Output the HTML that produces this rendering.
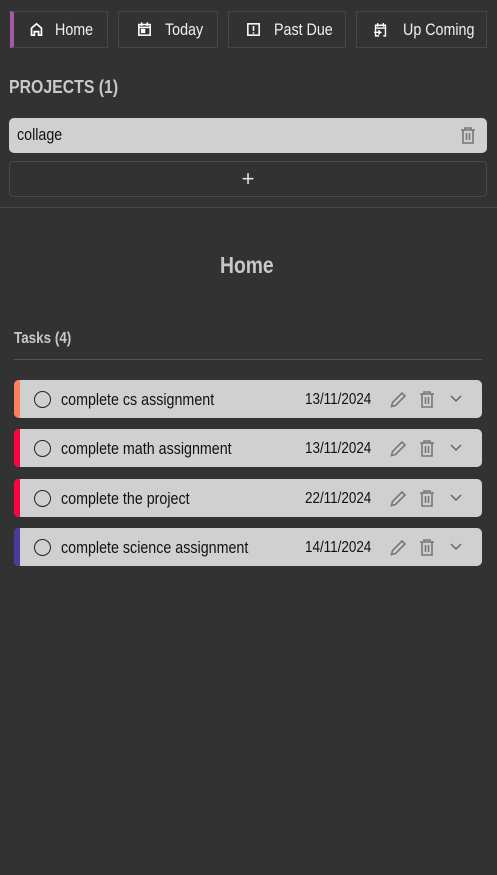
<!DOCTYPE html>
<html><head><style>
*{box-sizing:border-box;margin:0;padding:0}
body{width:497px;height:875px;background:#323232;font-family:"Liberation Sans",sans-serif;color:#ddd;position:relative;overflow:hidden}
.n{display:inline-block;transform:scaleX(0.84);transform-origin:left center;white-space:nowrap}
.nav{position:absolute;top:11px;height:37px;border:1px solid #474747;font-size:17px;color:#f0f0f0}
.nav svg{position:absolute;top:9px;width:17px;height:17px}
.nav .n{position:absolute;top:8px}
.abs{position:absolute}
.task{position:absolute;left:14px;width:468px;height:38px;background:#d0d0d0;border-radius:5px;overflow:hidden;color:#111;font-size:17px}
.task .bar{position:absolute;left:0;top:0;bottom:0;width:6px}
.circ{position:absolute;left:20px;top:11px;width:17px;height:17px;border:1.5px solid #222;border-radius:50%}
.tt{position:absolute;left:47px;top:10px}
.dt{position:absolute;left:291px;top:10px;font-size:16px}
.ic{position:absolute;top:11px}
</style></head><body>
<div class="nav" style="left:10px;width:98px;border-left:4px solid #a55aa5"><svg style="left:14px" viewBox="0 0 24 24" fill="none" stroke="#fff" stroke-width="2.4"><path d="M5 20V10l7-6 7 6v10h-4v-5h-6v5z"/></svg><span class="n" style="left:41px">Home</span></div>
<div class="nav" style="left:118px;width:100px"><svg style="left:17px" viewBox="0 0 24 24" fill="none" stroke="#fff" stroke-width="2.2"><rect x="4" y="5" width="16" height="15"/><path d="M4 9h16M8 2v5M16 2v5"/><rect x="8" y="12" width="4" height="4" fill="#fff"/></svg><span class="n" style="left:46px">Today</span></div>
<div class="nav" style="left:228px;width:118px"><svg style="left:16px" viewBox="0 0 24 24" fill="none" stroke="#fff" stroke-width="2.2"><rect x="4" y="4" width="16" height="16"/><path d="M12 7v7M12 16v2"/></svg><span class="n" style="left:45px">Past Due</span></div>
<div class="nav" style="left:356px;width:131px"><svg style="left:15px" viewBox="0 0 24 24" fill="none" stroke="#fff" stroke-width="2"><path d="M10 21H5V6h14v15h-3M5 10h14M8 3v5M16 3v5M3 16h9l-3-3M12 16l-3 3"/></svg><span class="n" style="left:46px">Up Coming</span></div>
<div class="abs" style="left:9px;top:77px;font-size:18px;font-weight:bold;color:#c8c8c8"><span class="n" style="transform:scaleX(0.88)">PROJECTS (1)</span></div>
<div class="abs" style="left:9px;top:118px;width:478px;height:35px;background:#d0d0d0;border-radius:5px;color:#111;font-size:17px;padding:7px 8px"><span class="n">collage</span>
<svg class="abs" style="right:11px;top:9px" width="16" height="17" viewBox="0 0 16 17" fill="none" stroke="#777" stroke-width="1.6"><path d="M1 3h14M5 3V1h6v2M3 3v13h10V3M6.5 6v7M9.5 6v7"/></svg></div>
<div class="abs" style="left:9px;top:161px;width:478px;height:36px;border:1px solid #4a4a4a;border-radius:5px;text-align:center;font-size:22px;line-height:34px;color:#ddd">+</div>
<div class="abs" style="left:0;top:207px;width:497px;height:1px;background:#4a4a4a"></div>
<div class="abs" style="left:220px;top:252px;font-size:23px;font-weight:bold;color:#c8c8c8"><span class="n">Home</span></div>
<div class="abs" style="left:14px;top:330px;font-size:16px;font-weight:bold;color:#c8c8c8"><span class="n">Tasks (4)</span></div>
<div class="abs" style="left:14px;top:359px;width:468px;height:1px;background:#555"></div>

<div class="task" style="top:380px"><div class="bar" style="background:#ff7f5a"></div><div class="circ"></div><span class="tt n">complete cs assignment</span><span class="dt n" style="top:11px">13/11/2024</span>
<svg class="ic" style="left:376px" width="16" height="17" viewBox="0 0 16 17" fill="none" stroke="#777" stroke-width="1.6"><path d="M1.5 15.5l1-4 9.5-9.5 3 3-9.5 9.5z"/></svg>
<svg class="ic" style="left:405px" width="16" height="17" viewBox="0 0 16 17" fill="none" stroke="#777" stroke-width="1.6"><path d="M1 3h14M5 3V1h6v2M3 3v13h10V3M6.5 6v7M9.5 6v7"/></svg>
<svg class="ic" style="left:436px;top:15px" width="12" height="8" viewBox="0 0 12 8" fill="none" stroke="#666" stroke-width="1.5"><path d="M1 1l5 5 5-5"/></svg></div>

<div class="task" style="top:429px"><div class="bar" style="background:#ff0040"></div><div class="circ"></div><span class="tt n">complete math assignment</span><span class="dt n" style="top:11px">13/11/2024</span>
<svg class="ic" style="left:376px" width="16" height="17" viewBox="0 0 16 17" fill="none" stroke="#777" stroke-width="1.6"><path d="M1.5 15.5l1-4 9.5-9.5 3 3-9.5 9.5z"/></svg>
<svg class="ic" style="left:405px" width="16" height="17" viewBox="0 0 16 17" fill="none" stroke="#777" stroke-width="1.6"><path d="M1 3h14M5 3V1h6v2M3 3v13h10V3M6.5 6v7M9.5 6v7"/></svg>
<svg class="ic" style="left:436px;top:15px" width="12" height="8" viewBox="0 0 12 8" fill="none" stroke="#666" stroke-width="1.5"><path d="M1 1l5 5 5-5"/></svg></div>

<div class="task" style="top:479px"><div class="bar" style="background:#ff0040"></div><div class="circ"></div><span class="tt n">complete the project</span><span class="dt n" style="top:11px">22/11/2024</span>
<svg class="ic" style="left:376px" width="16" height="17" viewBox="0 0 16 17" fill="none" stroke="#777" stroke-width="1.6"><path d="M1.5 15.5l1-4 9.5-9.5 3 3-9.5 9.5z"/></svg>
<svg class="ic" style="left:405px" width="16" height="17" viewBox="0 0 16 17" fill="none" stroke="#777" stroke-width="1.6"><path d="M1 3h14M5 3V1h6v2M3 3v13h10V3M6.5 6v7M9.5 6v7"/></svg>
<svg class="ic" style="left:436px;top:15px" width="12" height="8" viewBox="0 0 12 8" fill="none" stroke="#666" stroke-width="1.5"><path d="M1 1l5 5 5-5"/></svg></div>

<div class="task" style="top:528px"><div class="bar" style="background:#4a3a9c"></div><div class="circ"></div><span class="tt n">complete science assignment</span><span class="dt n" style="top:11px">14/11/2024</span>
<svg class="ic" style="left:376px" width="16" height="17" viewBox="0 0 16 17" fill="none" stroke="#777" stroke-width="1.6"><path d="M1.5 15.5l1-4 9.5-9.5 3 3-9.5 9.5z"/></svg>
<svg class="ic" style="left:405px" width="16" height="17" viewBox="0 0 16 17" fill="none" stroke="#777" stroke-width="1.6"><path d="M1 3h14M5 3V1h6v2M3 3v13h10V3M6.5 6v7M9.5 6v7"/></svg>
<svg class="ic" style="left:436px;top:15px" width="12" height="8" viewBox="0 0 12 8" fill="none" stroke="#666" stroke-width="1.5"><path d="M1 1l5 5 5-5"/></svg></div>
</body></html>
